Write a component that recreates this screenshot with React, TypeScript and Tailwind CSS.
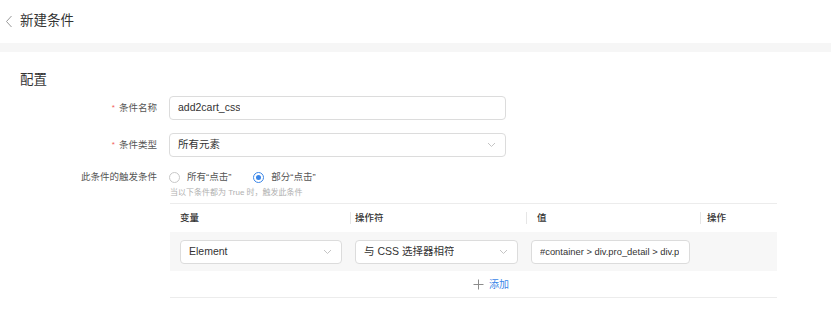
import React from 'react';

const FONT = "font-['Liberation_Sans','Noto_Sans_CJK_SC',sans-serif]";

const Chevron: React.FC = () => (
  <svg width="9" height="6" viewBox="0 0 9 6" className="shrink-0 text-[#c4c4c4]">
    <polyline points="1,1 4.5,4.5 8,1" fill="none" stroke="currentColor" strokeWidth="1" />
  </svg>
);

const Field: React.FC<{ value: string; select?: boolean; className?: string }> = ({
  value,
  select,
  className = '',
}) => (
  <div
    className={`flex h-[24px] items-center justify-between overflow-hidden rounded-[4px] border border-[#dcdcdc] bg-white pr-[9px] pl-[8px] text-[#333] ${className}`}
  >
    <span className="overflow-hidden whitespace-nowrap">{value}</span>
    {select && <Chevron />}
  </div>
);

const Label: React.FC<{ text: string; required?: boolean }> = ({ text, required }) => (
  <div className="flex w-[137px] shrink-0 items-center justify-end text-[9.5px] text-[#555]">
    {required && <span className="mr-[4px] text-[8px] text-[#f25b5b]">*</span>}
    {text}
  </div>
);

const Radio: React.FC<{ checked?: boolean; text: string }> = ({ checked, text }) => (
  <div className="flex items-center gap-[7px]">
    <span
      className={`flex h-[11px] w-[11px] items-center justify-center rounded-full border ${
        checked ? 'border-[#3a86e8]' : 'border-[#c8c8c8]'
      }`}
    >
      {checked && <span className="h-[5px] w-[5px] rounded-full bg-[#3a86e8]" />}
    </span>
    <span className="text-[9.5px] text-[#555]">{text}</span>
  </div>
);

const App: React.FC = () => {
  return (
    <div className={`h-[320px] w-[831px] overflow-hidden bg-white ${FONT}`}>
      <div className="flex h-[43px] items-center pl-[5px]">
        <svg width="8" height="13" viewBox="0 0 8 13" className="text-[#999]">
          <polyline points="6.5,1 1.5,6.5 6.5,12" fill="none" stroke="currentColor" strokeWidth="1" />
        </svg>
        <span className="ml-[7px] text-[13.5px] text-[#333]">新建条件</span>
      </div>
      <div className="h-[9px] bg-[#f6f6f6]" />

      <div className="pl-[20px]">
        <div className="pt-[19px] text-[13.5px] leading-[18px] text-[#333]">配置</div>

        <div className="mt-[7px] flex flex-col">
          <div className="flex items-center gap-[12px]">
            <Label text="条件名称" required />
            <Field value="add2cart_css" className="w-[337px] text-[10.5px]" />
          </div>
          <div className="mt-[13px] flex items-center gap-[12px]">
            <Label text="条件类型" required />
            <Field value="所有元素" select className="w-[337px] text-[10.5px]" />
          </div>
          <div className="mt-[13px] flex items-center gap-[12px]">
            <Label text="此条件的触发条件" />
            <div className="flex items-center gap-[22px]">
              <Radio text="所有“点击”" />
              <Radio text="部分“点击”" checked />
            </div>
          </div>
          <div className="mt-[4px] pl-[150px] text-[8px] leading-[10px] text-[#b0b0b0]">
            当以下条件都为 True 时，触发此条件
          </div>
        </div>

        <div className="mt-[5px] ml-[150px] w-[607px] border-t border-b border-[#ececec]">
          <div className="grid h-[28px] grid-cols-[180px_176px_174px_77px] items-center text-[9.5px] font-medium text-[#333]">
            <div className="pl-[10px]">变量</div>
            <div className="flex items-center">
              <span className="h-[12px] w-px bg-[#e6e6e6]" />
              <span className="pl-[4px]">操作符</span>
            </div>
            <div className="flex items-center">
              <span className="h-[12px] w-px bg-[#e6e6e6]" />
              <span className="pl-[10px]">值</span>
            </div>
            <div className="flex items-center">
              <span className="h-[12px] w-px bg-[#e6e6e6]" />
              <span className="pl-[6px]">操作</span>
            </div>
          </div>
          <div className="grid h-[39px] grid-cols-[180px_176px_174px_77px] items-center bg-[#f7f7f7]">
            <div className="pl-[10px]">
              <Field value="Element" select className="w-[162px] text-[10.5px]" />
            </div>
            <div className="pl-[5px]">
              <Field value="与 CSS 选择器相符" select className="w-[163px] text-[10.5px]" />
            </div>
            <div className="pl-[5px]">
              <Field
                value="#container > div.pro_detail > div.p"
                className="w-[159px] pr-[3px] text-[9.4px]"
              />
            </div>
            <div />
          </div>
          <div className="flex h-[26px] items-center pl-[303px]">
            <svg width="11" height="11" viewBox="0 0 11 11" className="text-[#8c8c8c]">
              <path d="M5.5 0.5v10M0.5 5.5h10" stroke="currentColor" strokeWidth="1" />
            </svg>
            <span className="ml-[5px] text-[10px] text-[#3a86e8]">添加</span>
          </div>
        </div>
      </div>
    </div>
  );
};

export default App;
